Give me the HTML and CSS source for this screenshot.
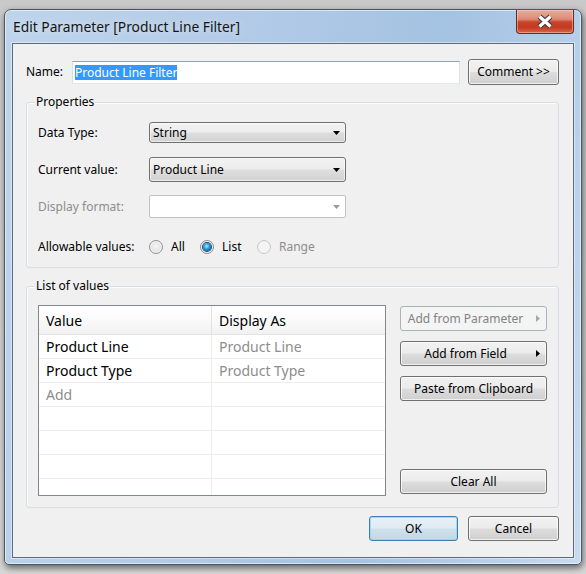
FILE: index.html
```html
<!DOCTYPE html>
<html>
<head>
<meta charset="utf-8">
<link rel="stylesheet" href="styles.css">
</head>
<body>
<div class="window">
  <div class="titlebar">
    <span class="title">Edit Parameter [Product Line Filter]</span>
    <div class="close">
      <svg width="18" height="15" viewBox="0 0 18 15">
        <path d="M3.5 2.5 L14.5 12.5 M14.5 2.5 L3.5 12.5" stroke="#3b3b3b" stroke-width="5.5" fill="none"/>
        <path d="M3.5 2.5 L14.5 12.5 M14.5 2.5 L3.5 12.5" stroke="#ffffff" stroke-width="3.2" fill="none"/>
      </svg>
    </div>
  </div>
  <div class="client">
    <div class="name-row">
      <span class="name-label">Name:</span>
      <div class="textbox"><span class="sel">Product Line Filter</span></div>
      <div class="btn comment">Comment &gt;&gt;</div>
    </div>

    <div class="group props">
      <div class="group-title">Properties</div>
      <div class="prow r1">
        <span class="plabel">Data Type:</span>
        <div class="combo h21"><span>String</span><svg class="arr" width="7" height="4" viewBox="0 0 7 4"><path d="M0 0H7L3.5 4Z" fill="#000"/></svg></div>
      </div>
      <div class="prow">
        <span class="plabel">Current value:</span>
        <div class="combo h25"><span>Product Line</span><svg class="arr" width="7" height="4" viewBox="0 0 7 4"><path d="M0 0H7L3.5 4Z" fill="#000"/></svg></div>
      </div>
      <div class="prow">
        <span class="plabel muted">Display format:</span>
        <div class="combo h23 off"><span></span><svg class="arr" width="7" height="4" viewBox="0 0 7 4"><path d="M0 0H7L3.5 4Z" fill="#9a9a9a"/></svg></div>
      </div>
      <div class="prow allow">
        <span class="plabel">Allowable values:</span>
        <span class="opt o1"><span class="radio"></span><span>All</span></span>
        <span class="opt o2"><span class="radio on"></span><span>List</span></span>
        <span class="opt"><span class="radio dis"></span><span class="muted">Range</span></span>
      </div>
    </div>

    <div class="group values">
      <div class="group-title">List of values</div>
      <div class="values-body">
        <div class="grid">
          <div class="ghead"><div class="c1">Value</div><div class="c2">Display As</div></div>
          <div class="grow"><div class="c1">Product Line</div><div class="c2 muted">Product Line</div></div>
          <div class="grow"><div class="c1">Product Type</div><div class="c2 muted">Product Type</div></div>
          <div class="grow"><div class="c1 muted">Add</div><div class="c2"></div></div>
          <div class="grow"><div class="c1"></div><div class="c2"></div></div>
          <div class="grow"><div class="c1"></div><div class="c2"></div></div>
          <div class="grow"><div class="c1"></div><div class="c2"></div></div>
          <div class="grow"><div class="c1"></div><div class="c2"></div></div>
        </div>
        <div class="side">
          <div class="btn sbtn disabled"><span class="lbl">Add from Parameter</span><svg class="rarr" width="4" height="7" viewBox="0 0 4 7"><path d="M0 0V7L4 3.5Z" fill="#a8a8a8"/></svg></div>
          <div class="btn sbtn"><span class="lbl">Add from Field</span><svg class="rarr" width="4" height="7" viewBox="0 0 4 7"><path d="M0 0V7L4 3.5Z" fill="#000"/></svg></div>
          <div class="btn sbtn">Paste from Clipboard</div>
          <div class="btn sbtn clear">Clear All</div>
        </div>
      </div>
    </div>

    <div class="footer">
      <div class="btn ok">OK</div>
      <div class="btn cancel">Cancel</div>
    </div>
  </div>
</div>
</body>
</html>
```
FILE: styles.css
```css
html, body {
  margin: 0;
}
body {
  width: 586px;
  height: 574px;
  overflow: hidden;
  box-sizing: border-box;
  padding: 9px 0 0 4px;
  background: linear-gradient(#c9c9c9, #d8d8d8);
  font-family: "Noto Sans", "DejaVu Sans", sans-serif;
  font-size: 12px;
  color: #000;
}
.window {
  box-sizing: border-box;
  width: 578px;
  height: 556px;
  border: 1px solid #4a5562;
  border-radius: 7px 7px 5px 5px;
  background: linear-gradient(100deg, #bed4eb 0%, #b3cbe7 35%, #a4c2e2 66%, #b8d0ea 88%, #c8dbef 100%);
  box-shadow: 1px 3px 7px rgba(0, 0, 0, 0.55), inset 0 0 0 1px rgba(255, 255, 255, 0.55);
  display: flex;
  flex-direction: column;
}
.titlebar {
  flex: none;
  height: 33px;
  display: flex;
  justify-content: space-between;
  align-items: flex-start;
}
.title {
  font-size: 13.8px;
  line-height: 20px;
  padding: 7px 0 0 8px;
  color: #141414;
  text-shadow: 0 0 8px rgba(255, 255, 255, 0.7);
}
.close {
  margin-right: 7px;
  width: 58px;
  height: 24px;
  box-sizing: border-box;
  border: 1px solid #6b2a20;
  border-top: none;
  border-radius: 0 0 4px 4px;
  background: linear-gradient(#e9ac9e 0%, #dd8a76 40%, #c9442b 52%, #c33a20 75%, #d8674c 100%);
  box-shadow: inset 0 0 0 1px rgba(255, 220, 210, 0.45);
  display: flex;
  align-items: center;
  justify-content: center;
}
.client {
  flex: none;
  height: 515px;
  margin: 0 7px 6px 7px;
  box-sizing: border-box;
  border: 1px solid #5c6a7a;
  box-shadow: 0 0 0 1px rgba(255, 255, 255, 0.45);
  background: #f0f0f0;
  padding: 0 14px 0 13px;
  display: flex;
  flex-direction: column;
}
.client > * {
  flex: none;
}
.name-row {
  margin-top: 15px;
  height: 26px;
  display: flex;
  align-items: center;
}
.name-label {
  width: 46px;
  line-height: 16px;
}
.textbox {
  width: 388px;
  height: 23px;
  box-sizing: border-box;
  border: 1px solid;
  border-color: #8ea3b8 #d9e0e8 #e3e9ef #d9e0e8;
  background: #fff;
  padding: 0 2px;
  display: flex;
  align-items: center;
}
.sel {
  background: #3399ff;
  color: #fff;
  line-height: 15px;
}
.btn {
  box-sizing: border-box;
  border: 1px solid #707070;
  border-radius: 3px;
  background: linear-gradient(#f2f2f2 0%, #ebebeb 49%, #dddddd 51%, #cfcfcf 100%);
  box-shadow: inset 0 0 0 1px rgba(255, 255, 255, 0.7);
  display: flex;
  align-items: center;
  justify-content: center;
  line-height: 16px;
  color: #000;
}
.comment {
  width: 91px;
  height: 26px;
  margin-left: 8px;
}
.group {
  border: 1px solid #d5dfe5;
  border-radius: 3px;
  box-shadow: inset 1px 1px 0 #fafcfd;
}
.group-title {
  width: fit-content;
  margin: -9px 0 0 -3px;
  padding: 0 1px;
  line-height: 15px;
  background: #f0f0f0;
}
.props {
  margin-top: 17px;
  padding: 0 11px 12px 11px;
}
.prow {
  display: flex;
  align-items: center;
  height: 25px;
  margin-top: 12px;
}
.prow.r1 {
  margin-top: 11px;
}
.prow.allow {
  height: 16px;
  margin-top: 20px;
}
.plabel {
  width: 111px;
  flex: none;
  line-height: 16px;
}
.muted {
  color: #8d8d8d;
}
.combo {
  width: 197px;
  box-sizing: border-box;
  display: flex;
  align-items: center;
  justify-content: space-between;
  padding: 0 5px 0 3px;
  border: 1px solid #707070;
  border-radius: 3px;
  background: linear-gradient(#f3f3f3 0%, #ececec 49%, #dedede 51%, #d2d2d2 100%);
  box-shadow: inset 0 0 0 1px rgba(255, 255, 255, 0.6);
  line-height: 16px;
}
.combo.off {
  background: #fff;
  border-color: #bfc3c7;
  border-radius: 2px;
  box-shadow: none;
}
.h21 { height: 21px; }
.h23 { height: 23px; }
.h25 { height: 25px; }
.opt {
  display: flex;
  align-items: center;
  gap: 8px;
  line-height: 16px;
}
.o1 {
  width: 51px;
}
.o2 {
  width: 57px;
}
.radio {
  flex: none;
  width: 14px;
  height: 14px;
  box-sizing: border-box;
  border-radius: 50%;
  border: 1px solid #8e8f8f;
  background: radial-gradient(circle at 50% 45%, #f6f6f6 0%, #e4e4e4 55%, #cfcfcf 100%);
  box-shadow: inset 0 0 0 1px #f8f8f8;
  display: flex;
  align-items: center;
  justify-content: center;
}
.radio.on::after {
  content: "";
  width: 8px;
  height: 8px;
  border-radius: 50%;
  background: radial-gradient(circle at 45% 40%, #a6e8ff 0%, #34a8e2 38%, #0d5f9a 72%, #0b3a62 100%);
  box-shadow: 0 0 0 1px #1d4d74;
}
.radio.dis {
  border-color: #c8c8c8;
  background: #f4f4f4;
  box-shadow: none;
}
.values {
  margin-top: 18px;
  padding: 0 11px 11px 11px;
}
.values-body {
  display: flex;
  margin-top: 12px;
}
.grid {
  flex: none;
  width: 348px;
  height: 191px;
  box-sizing: border-box;
  border: 1px solid #828790;
  background: #fff;
  overflow: hidden;
  font-size: 14px;
}
.ghead {
  display: flex;
  height: 29px;
  box-sizing: border-box;
  border-bottom: 1px solid #e3e3e3;
  background: linear-gradient(#ffffff 0%, #fbfbfb 40%, #f2f2f3 100%);
}
.ghead .c1 {
  border-right-color: #e2e2e2;
}
.grow {
  display: flex;
  height: 24px;
  box-sizing: border-box;
  border-bottom: 1px solid #ededed;
}
.c1 {
  width: 173px;
  flex: none;
  box-sizing: border-box;
  border-right: 1px solid #ededed;
  padding-left: 7px;
  display: flex;
  align-items: center;
}
.c2 {
  flex: 1;
  padding-left: 7px;
  display: flex;
  align-items: center;
}
.side {
  width: 147px;
  margin-left: 14px;
  padding-top: 1px;
  display: flex;
  flex-direction: column;
}
.sbtn {
  height: 25px;
  flex: none;
}
.sbtn + .sbtn {
  margin-top: 10px;
}
.sbtn .lbl {
  flex: 1;
  text-align: center;
  padding-right: 6px;
}
.sbtn .rarr {
  margin-right: 6px;
}
.sbtn.clear {
  margin-top: auto;
  margin-bottom: 2px;
}
.btn.disabled {
  border-color: #adb2b5;
  background: #f4f4f4;
  box-shadow: none;
  color: #838383;
}
.footer {
  display: flex;
  justify-content: flex-end;
  gap: 10px;
  margin-top: 8px;
}
.ok {
  width: 89px;
  height: 25px;
  border-color: #3c7fb1;
  background: linear-gradient(#e8f1f7 0%, #e0eaf1 49%, #cfe1ec 51%, #c2d7e5 100%);
  box-shadow: inset 0 0 0 1px rgba(140, 215, 245, 0.8);
}
.cancel {
  width: 91px;
  height: 25px;
}
```
